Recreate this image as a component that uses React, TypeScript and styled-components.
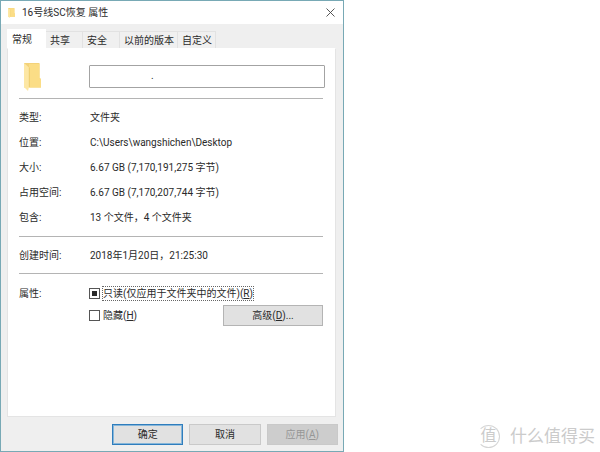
import React, { useEffect, useRef } from "react";
import styled, { createGlobalStyle } from "styled-components";

const GlobalStyle = createGlobalStyle`
  * { box-sizing: border-box; }
  body {
    margin: 0;
    background: #fff;
    color: #2a2a2a;
    font-family: Roboto, "Noto Sans CJK SC", sans-serif;
    font-size: 10px;
    line-height: 15px;
  }
  button, input { font: inherit; color: inherit; }
`;

const Page = styled.main`
  position: relative;
  min-height: 100vh;
  display: flex;
  align-items: stretch;
`;

const Dialog = styled.section`
  width: 100%;
  max-width: 344px;
  display: flex;
  flex-direction: column;
  background: #efefef;
  border: 1px solid #78a9b5;
`;

const TitleBar = styled.header`
  display: flex;
  align-items: center;
  gap: 7px;
  height: 23px;
  padding: 0 8px 0 7px;
  background: #fff;
`;

const Title = styled.h1`
  flex: 1;
  margin: 0;
  font-size: 10px;
  font-weight: 400;
`;

const CloseButton = styled.button`
  display: flex;
  padding: 0;
  border: 0;
  background: none;
`;

const Tabs = styled.div`
  display: flex;
  align-items: flex-end;
  height: 24px;
  padding-left: 6px;
`;

const Tab = styled.button<{ $active?: boolean }>`
  height: ${(p) => (p.$active ? 19 : 17)}px;
  min-width: ${(p) => (p.$active ? 39 : 37)}px;
  padding: 1px 3px 0 ${(p) => (p.$active ? 5 : 4)}px;
  border: 1px solid ${(p) => (p.$active ? "#fff" : "#e2e2e2")};
  border-left-width: 0;
  border-bottom: 0;
  background: ${(p) => (p.$active ? "#fff" : "#f0f0f0")};
  line-height: 16px;
  text-align: left;
  white-space: nowrap;
`;

const Panel = styled.div`
  flex: 1;
  display: flex;
  flex-direction: column;
  margin: 0 7px 0 6px;
  padding: 14px 10px 0 11px;
  background: #fff;
  border: 1px solid #e4e4e4;
  border-top-color: #fff;
`;

const NameRow = styled.div`
  display: flex;
  align-items: flex-start;
  padding: 0 0 7px 5px;
  gap: 48px;
`;

const NameInput = styled.input`
  flex: 1;
  min-width: 0;
  height: 23px;
  margin-top: 2px;
  padding: 0 0 3px 61px;
  border: 1px solid #a3a3a3;
  border-radius: 1px;
  background: #fff;
`;

const Rule = styled.hr`
  width: 100%;
  max-width: 304px;
  margin: 0;
  border: 0;
  border-top: 1px solid #b4b4b4;
`;

const Details = styled.dl<{ $compact?: boolean }>`
  margin: 0;
  padding: 11px 0 ${(p) => (p.$compact ? 10 : 11)}px;
  display: grid;
  grid-template-columns: 71px 1fr;
  row-gap: 10px;
`;

const Term = styled.dt`
  white-space: nowrap;
`;

const Value = styled.dd`
  margin: 0;
  white-space: nowrap;
`;

const Attributes = styled.div`
  display: grid;
  grid-template-columns: 70px 1fr;
  padding: 8px 2px 0 0;
`;

const AttributesTitle = styled.span`
  padding-top: 4px;
`;

const Options = styled.div`
  display: flex;
  flex-direction: column;
`;

const OptionRow = styled.div`
  display: flex;
  justify-content: space-between;
  align-items: center;
  height: 22px;
`;

const CheckLabel = styled.label`
  display: flex;
  align-items: center;
  gap: 2px;
  white-space: nowrap;
`;

const CheckInput = styled.input`
  appearance: none;
  width: 11px;
  height: 11px;
  margin: 0;
  border: 1px solid #555;
  background: #fff;
  &:indeterminate {
    background: #2b2b2b content-box;
    padding: 2px;
  }
`;

const LabelText = styled.span<{ $focused?: boolean }>`
  padding-top: 1px;
  line-height: 12px;
  border: 1px ${(p) => (p.$focused ? "dotted #666" : "solid transparent")};
`;

const Button = styled.button<{ $primary?: boolean }>`
  flex: 1;
  height: 21px;
  padding: 0;
  border: ${(p) => (p.$primary ? "1px solid #2f7dbd" : "1px solid #c9c9c9")};
  box-shadow: ${(p) => (p.$primary ? "inset 0 0 0 1px #86b6d9" : "none")};
  background: #e1e1e1;
  &:disabled {
    background: #cdcdcd;
    border-color: #c9c9c9;
    color: #969696;
  }
`;

const AdvancedButton = styled(Button)`
  flex: 0 0 100px;
  border-color: #b4b4b4;
`;

const Footer = styled.footer`
  display: flex;
  gap: 6px;
  padding: 7px 5px 6px 111px;
`;

const Watermark = styled.div`
  position: absolute;
  right: 5px;
  bottom: 3px;
  display: flex;
  align-items: center;
  gap: 10px;
  color: #cbcbcb;
  font-size: 17px;
  line-height: 26px;
`;

const Seal = styled.span`
  width: 23px;
  height: 23px;
  border: 1px solid #d5d5d5;
  border-left-color: transparent;
  border-radius: 50%;
  font-size: 16px;
  line-height: 20px;
  text-align: center;
`;

function Folder({ width, height }: { width: number; height: number }) {
  return (
    <svg width={width} height={height} viewBox="0 0 17 28" preserveAspectRatio="none" aria-hidden="true">
      <path d="M0 0H15.5V15L17 16V24.5H0Z" fill="#f3d27a" />
      <path d="M5 1H15.5V15L17 16V24.5H5Z" fill="#fbdd86" />
      <path d="M0 0L5 4.5V24L4 28L0 24Z" fill="#fde7a4" />
      <path d="M5.3 4.5V24" stroke="#e8c565" strokeWidth=".7" />
    </svg>
  );
}

const tabs = ["常规", "共享", "安全", "以前的版本", "自定义"];
const details = [
  ["类型:", "文件夹"],
  ["位置:", "C:\\Users\\wangshichen\\Desktop"],
  ["大小:", "6.67 GB (7,170,191,275 字节)"],
  ["占用空间:", "6.67 GB (7,170,207,744 字节)"],
  ["包含:", "13 个文件，4 个文件夹"],
];

export default function App() {
  const readOnly = useRef<HTMLInputElement>(null);
  useEffect(() => {
    if (readOnly.current) readOnly.current.indeterminate = true;
  }, []);

  return (
    <Page>
      <GlobalStyle />
      <Dialog role="dialog" aria-labelledby="title">
        <TitleBar>
          <Folder width={7} height={10} />
          <Title id="title">16号线SC恢复 属性</Title>
          <CloseButton aria-label="关闭">
            <svg width="9" height="9" viewBox="0 0 9 9" stroke="#444" strokeWidth=".9">
              <path d="M.5 .5L8.5 8.5M8.5 .5L.5 8.5" />
            </svg>
          </CloseButton>
        </TitleBar>
        <Tabs role="tablist">
          {tabs.map((name, i) => (
            <Tab key={name} role="tab" aria-selected={i === 0} $active={i === 0}>
              {name}
            </Tab>
          ))}
        </Tabs>
        <Panel role="tabpanel">
          <NameRow>
            <Folder width={17} height={28} />
            <NameInput aria-label="名称" defaultValue="." />
          </NameRow>
          <Rule />
          <Details>
            {details.map(([term, value]) => (
              <React.Fragment key={term}>
                <Term>{term}</Term>
                <Value>{value}</Value>
              </React.Fragment>
            ))}
          </Details>
          <Rule />
          <Details $compact>
            <Term>创建时间:</Term>
            <Value>2018年1月20日，21:25:30</Value>
          </Details>
          <Rule />
          <Attributes>
            <AttributesTitle>属性:</AttributesTitle>
            <Options>
              <OptionRow>
                <CheckLabel>
                  <CheckInput ref={readOnly} type="checkbox" />
                  <LabelText $focused>
                    只读(仅应用于文件夹中的文件)(<u>R</u>)
                  </LabelText>
                </CheckLabel>
              </OptionRow>
              <OptionRow>
                <CheckLabel>
                  <CheckInput type="checkbox" />
                  <LabelText>
                    隐藏(<u>H</u>)
                  </LabelText>
                </CheckLabel>
                <AdvancedButton>
                  高级(<u>D</u>)...
                </AdvancedButton>
              </OptionRow>
            </Options>
          </Attributes>
        </Panel>
        <Footer>
          <Button $primary>确定</Button>
          <Button>取消</Button>
          <Button disabled>
            应用(<u>A</u>)
          </Button>
        </Footer>
      </Dialog>
      <Watermark>
        <Seal>值</Seal>
        <span>什么值得买</span>
      </Watermark>
    </Page>
  );
}
